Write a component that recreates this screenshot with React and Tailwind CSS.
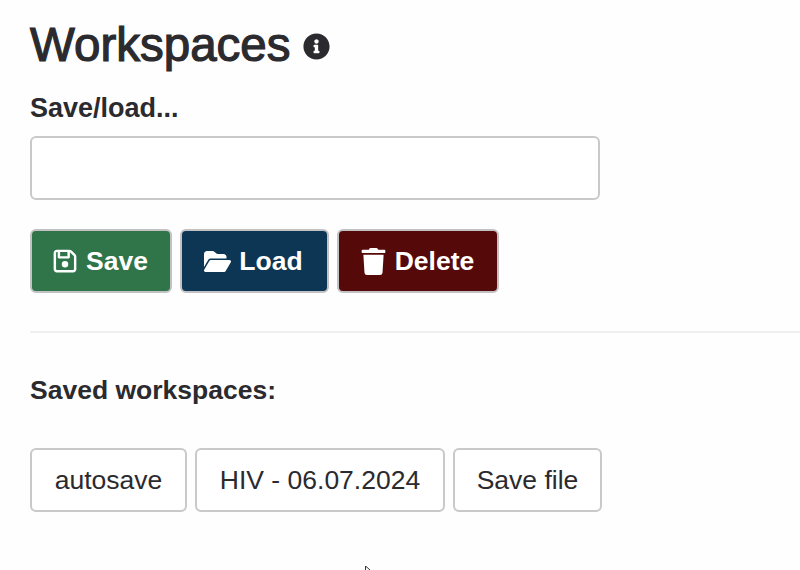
import { FaInfoCircle, FaTrash } from 'react-icons/fa';
import { FaRegFloppyDisk, FaFolderOpen } from 'react-icons/fa6';

const actionButtons = [
  { label: 'Save', Icon: FaRegFloppyDisk, bg: 'bg-[#2f7549]', width: 'w-[142px]', iconSize: 'text-[26px]' },
  { label: 'Load', Icon: FaFolderOpen, bg: 'bg-[#0d3655]', width: 'w-[149px]', iconSize: 'text-[27px]' },
  { label: 'Delete', Icon: FaTrash, bg: 'bg-[#560909]', width: 'w-[162px]', iconSize: 'text-[27px]' },
];

const savedButtons = [
  { label: 'autosave', width: 'w-[157px]' },
  { label: 'HIV - 06.07.2024', width: 'w-[250px]' },
  { label: 'Save file', width: 'w-[149px]' },
];

const App = () => {
  return (
    <div className="relative h-[570px] w-[800px] overflow-hidden bg-[#fefefe] pl-[30px] pt-[18px] font-['Liberation_Sans',Arial,sans-serif] text-[#2b2a2e]">
      <div className="flex h-[54px] items-center">
        <h1 className="text-[47.5px] font-normal leading-[54px] [-webkit-text-stroke:1.2px_#2b2a2e]">Workspaces</h1>
        <FaInfoCircle className="ml-[13px] mt-[2px] text-[27px]" />
      </div>

      <label className="mt-[22px] block text-[27px] font-bold leading-[29px]">Save/load...</label>
      <input
        type="text"
        className="mt-[13px] block h-[64px] w-[570px] rounded-[6px] border-2 border-[#c9c9cb] bg-white"
      />

      <div className="mt-[29px] flex gap-[8px]">
        {actionButtons.map(({ label, Icon, bg, width, iconSize }) => (
          <button
            key={label}
            className={`flex h-[64px] items-center justify-center gap-[8px] rounded-[6px] border-2 border-[#c2c2c4] pr-[2px] text-[26.5px] font-bold text-white ${bg} ${width}`}
          >
            <Icon className={iconSize} />
            <span className="pt-[2px]">{label}</span>
          </button>
        ))}
      </div>

      <hr className="-mr-[30px] mt-[38px] border-t-2 border-[#efeff0]" />

      <h2 className="mt-[43px] text-[26.5px] font-bold leading-[29px]">Saved workspaces:</h2>

      <div className="mt-[43px] flex gap-[8px]">
        {savedButtons.map(({ label, width }) => (
          <button
            key={label}
            className={`h-[64px] rounded-[6px] border-2 border-[#c9c9cb] bg-white pt-[2px] text-[26.5px] ${width}`}
          >
            {label}
          </button>
        ))}
      </div>

      {/* mouse pointer tip, cut off by the bottom edge */}
      <svg className="absolute left-[365px] top-[566px] h-[4px] w-[6px]" viewBox="0 0 6 4">
        <path d="M0.5 0 L0.5 4 M0.5 0 L5 4" stroke="#333" strokeWidth="1" fill="none" />
      </svg>
    </div>
  );
};

export default App;
